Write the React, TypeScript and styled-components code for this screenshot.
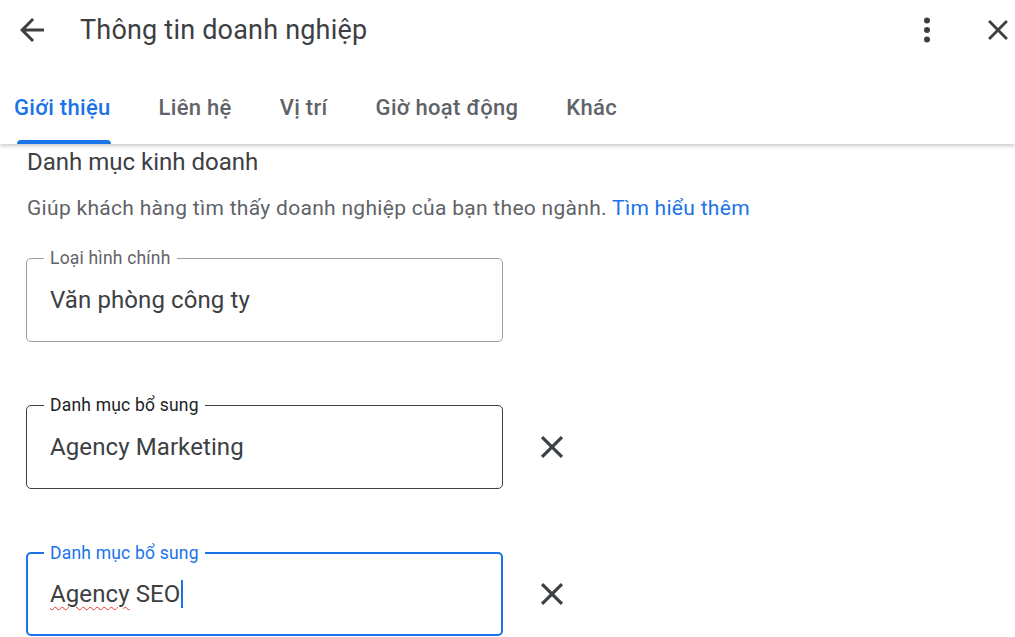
import React from "react";
import styled, { createGlobalStyle, css } from "styled-components";

const GlobalStyle = createGlobalStyle`
  html, body {
    margin: 0;
    padding: 0;
    background: #fff;
  }
  body {
    font-family: Roboto, "Noto Sans", Arial, sans-serif;
    color: #3c4043;
    overflow: hidden;
  }
`;

type FieldState = "idle" | "hover" | "focus";

const Page = styled.div`
  width: 1015px;
  height: 637px;
  overflow: hidden;
  display: flex;
  flex-direction: column;
`;

const Header = styled.header`
  display: flex;
  flex-direction: column;
  background: #fff;
  box-shadow: 0 2px 4px rgba(0, 0, 0, 0.22);
  position: relative;
  z-index: 1;
`;

const TopBar = styled.div`
  height: 60px;
  display: flex;
  align-items: center;
  padding: 0 0 0 14px;
`;

const IconButton = styled.button<{ $size?: number }>`
  width: ${(p) => p.$size ?? 36}px;
  height: ${(p) => p.$size ?? 36}px;
  padding: 0;
  border: none;
  background: none;
  display: flex;
  align-items: center;
  justify-content: center;
  color: #3c4043;
  cursor: pointer;
  flex-shrink: 0;
`;

const Title = styled.h1`
  margin: 0 0 0 30px;
  font-size: 27px;
  font-weight: 400;
  color: #3c4043;
  flex: 1;
  letter-spacing: 0.2px;
`;

const Actions = styled.div`
  display: flex;
  align-items: center;
  gap: 35px;
`;

const TabBar = styled.nav`
  height: 84px;
  display: flex;
  align-items: flex-end;
  padding-left: 14px;
  gap: 48px;
`;

const Tab = styled.div<{ $active?: boolean }>`
  display: flex;
  flex-direction: column;
  align-items: center;
  font-size: 22px;
  font-weight: 500;
  letter-spacing: 0.3px;
  color: ${(p) => (p.$active ? "#1a73e8" : "#5f6368")};
  cursor: pointer;
`;

const TabLabel = styled.span`
  line-height: 26px;
  white-space: nowrap;
`;

const TabIndicator = styled.span<{ $active?: boolean }>`
  margin-top: 19px;
  height: 4px;
  align-self: stretch;
  margin-left: 3px;
  border-radius: 4px 4px 0 0;
  background: ${(p) => (p.$active ? "#1a73e8" : "transparent")};
`;

const Content = styled.main`
  padding: 4px 0 0 27px;
  display: flex;
  flex-direction: column;
`;

const SectionTitle = styled.h2`
  margin: 0;
  font-size: 24px;
  font-weight: 400;
  line-height: 28px;
  color: #3c4043;
`;

const Description = styled.p`
  margin: 19px 0 0;
  font-size: 21px;
  letter-spacing: 0.3px;
  line-height: 26px;
  color: #5f6368;
`;

const Link = styled.a`
  color: #1a73e8;
  text-decoration: none;
`;

const FieldList = styled.div`
  margin-top: 37px;
  display: flex;
  flex-direction: column;
  gap: 63px;
`;

const FieldRow = styled.div`
  display: flex;
  align-items: center;
  gap: 30px;
  margin-left: -1px;
`;

const FieldBox = styled.div<{ $state: FieldState }>`
  position: relative;
  box-sizing: border-box;
  width: 477px;
  height: 84px;
  border-radius: 5px;
  display: flex;
  align-items: center;
  ${(p) =>
    p.$state === "focus"
      ? css`
          border: 2px solid #1a73e8;
          padding: 0 22px;
        `
      : css`
          border: 1px solid ${p.$state === "hover" ? "#3c4043" : "#9aa0a6"};
          padding: 0 23px;
        `}
`;

const FieldLabel = styled.label<{ $state: FieldState }>`
  position: absolute;
  top: -12px;
  left: ${(p) => (p.$state === "focus" ? 16 : 17)}px;
  padding: 0 6px;
  background: #fff;
  font-size: 17.5px;
  letter-spacing: 0.2px;
  line-height: 22px;
  color: ${(p) =>
    p.$state === "focus" ? "#1a73e8" : p.$state === "hover" ? "#202124" : "#5f6368"};
`;

const FieldValue = styled.div`
  font-size: 24px;
  letter-spacing: 0.1px;
  line-height: 28px;
  color: #3c4043;
  display: flex;
  align-items: center;
  white-space: pre;
`;

const Misspelled = styled.span`
  text-decoration: underline wavy #e53935;
  text-decoration-thickness: 1px;
  text-underline-offset: 4px;
`;

const Caret = styled.span`
  width: 2px;
  height: 28px;
  margin-left: 1px;
  background: #1a73e8;
`;

const BackIcon = () => (
  <svg width="36" height="36" viewBox="0 0 24 24" fill="currentColor">
    <path d="M20 11H7.83l5.59-5.59L12 4l-8 8 8 8 1.41-1.41L7.83 13H20v-2z" />
  </svg>
);

const MoreIcon = () => (
  <svg width="38" height="38" viewBox="0 0 24 24" fill="currentColor">
    <circle cx="12" cy="6" r="1.9" />
    <circle cx="12" cy="12" r="1.9" />
    <circle cx="12" cy="18" r="1.9" />
  </svg>
);

const CloseIcon = ({ size }: { size: number }) => (
  <svg width={size} height={size} viewBox="0 0 24 24" fill="currentColor">
    <path d="M19 6.41L17.59 5 12 10.59 6.41 5 5 6.41 10.59 12 5 17.59 6.41 19 12 13.41 17.59 19 19 17.59 13.41 12z" />
  </svg>
);

const tabs = ["Giới thiệu", "Liên hệ", "Vị trí", "Giờ hoạt động", "Khác"];

const App: React.FC = () => {
  return (
    <Page>
      <GlobalStyle />
      <Header>
        <TopBar>
          <IconButton aria-label="Quay lại">
            <BackIcon />
          </IconButton>
          <Title>Thông tin doanh nghiệp</Title>
          <Actions>
            <IconButton aria-label="Tùy chọn khác" $size={38}>
              <MoreIcon />
            </IconButton>
            <IconButton aria-label="Đóng" $size={34}>
              <CloseIcon size={34} />
            </IconButton>
          </Actions>
        </TopBar>
        <TabBar>
          {tabs.map((tab, i) => (
            <Tab key={tab} $active={i === 0}>
              <TabLabel>{tab}</TabLabel>
              <TabIndicator $active={i === 0} />
            </Tab>
          ))}
        </TabBar>
      </Header>

      <Content>
        <SectionTitle>Danh mục kinh doanh</SectionTitle>
        <Description>
          Giúp khách hàng tìm thấy doanh nghiệp của bạn theo ngành.{" "}
          <Link href="#">Tìm hiểu thêm</Link>
        </Description>

        <FieldList>
          <FieldRow>
            <FieldBox $state="idle">
              <FieldLabel $state="idle">Loại hình chính</FieldLabel>
              <FieldValue>Văn phòng công ty</FieldValue>
            </FieldBox>
          </FieldRow>

          <FieldRow>
            <FieldBox $state="hover">
              <FieldLabel $state="hover">Danh mục bổ sung</FieldLabel>
              <FieldValue>Agency Marketing</FieldValue>
            </FieldBox>
            <IconButton aria-label="Xóa" $size={38}>
              <CloseIcon size={38} />
            </IconButton>
          </FieldRow>

          <FieldRow>
            <FieldBox $state="focus">
              <FieldLabel $state="focus">Danh mục bổ sung</FieldLabel>
              <FieldValue>
                <Misspelled>Agency</Misspelled> SEO
                <Caret />
              </FieldValue>
            </FieldBox>
            <IconButton aria-label="Xóa" $size={38}>
              <CloseIcon size={38} />
            </IconButton>
          </FieldRow>
        </FieldList>
      </Content>
    </Page>
  );
};

export default App;
